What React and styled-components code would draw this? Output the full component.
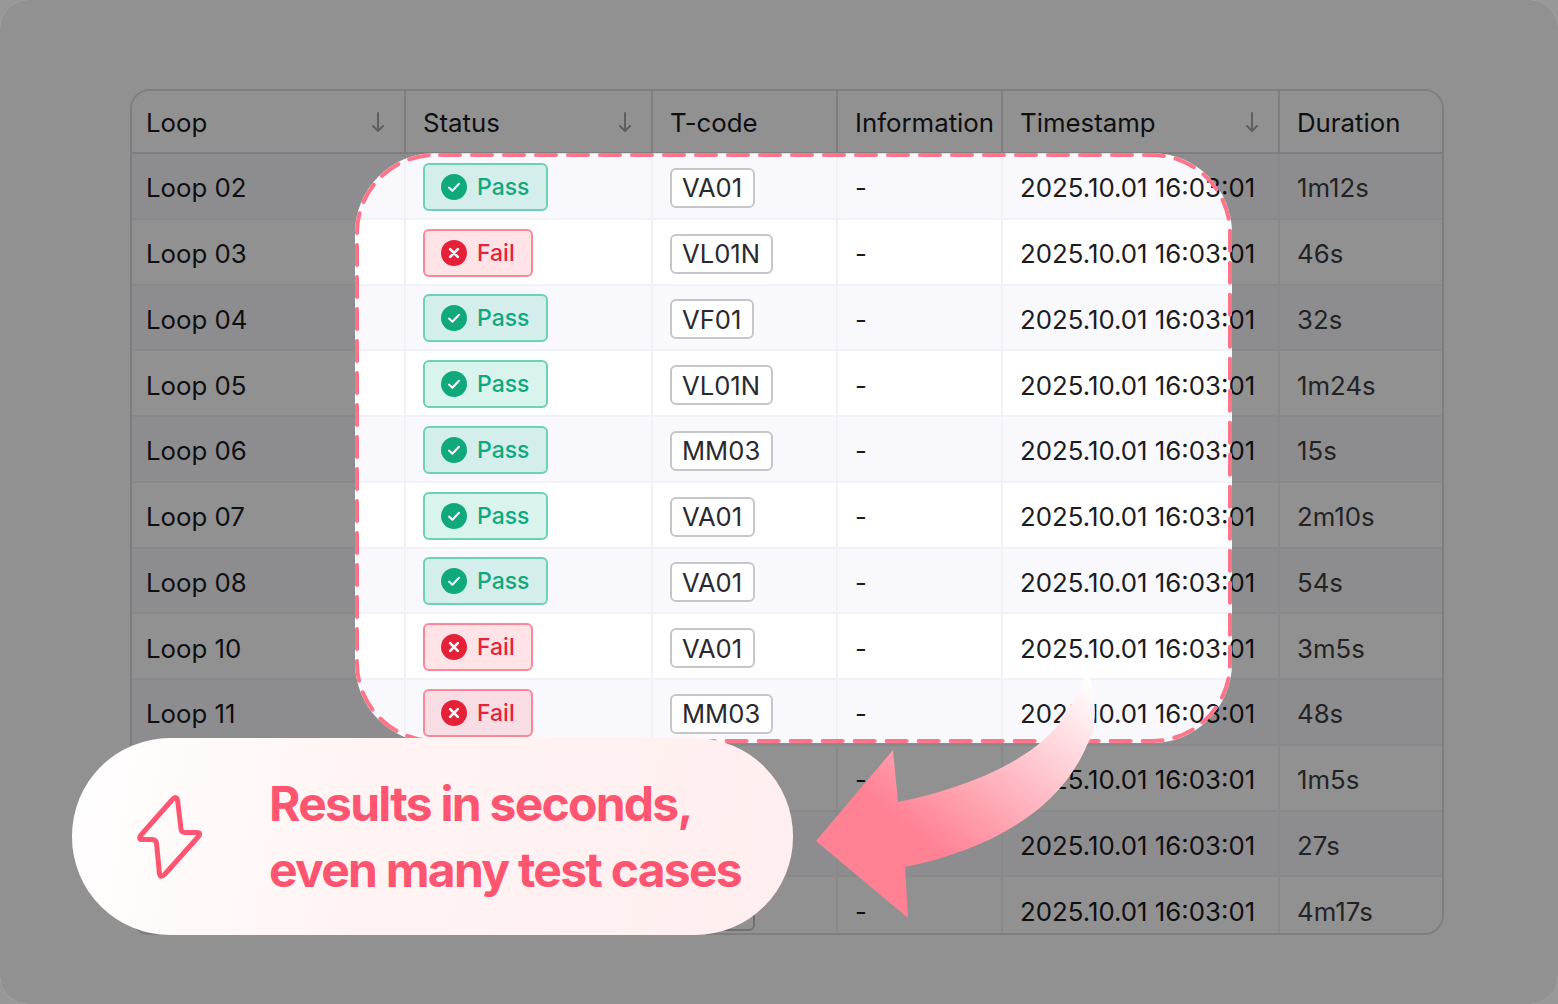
import React from 'react'
import styled, { createGlobalStyle } from 'styled-components'

const GlobalStyle = createGlobalStyle`
  html, body {
    margin: 0;
    padding: 0;
    background: #989898;
  }
  * {
    box-sizing: border-box;
  }
`

const Frame = styled.div`
  position: relative;
  width: 1558px;
  height: 1004px;
  padding: 89px 114px 69px 130px;
  overflow: hidden;
  border-radius: 28px;
  background: #ffffff;
  font-family: Inter, "Liberation Sans", sans-serif;
  color: #1c1c1f;
`

const Table = styled.div`
  height: 846px;
  overflow: hidden;
  border: 2px solid #dddde2;
  border-radius: 20px;
`

const Row = styled.div`
  display: grid;
  grid-template-columns: 274px 247px 185px 165px 277px 1fr;
  height: ${p => (p.$head ? '63px' : '65.75px')};
  background: ${p => (p.$alt ? '#f8f8fd' : '#ffffff')};
  border-bottom: 2px solid ${p => (p.$head ? '#dddde2' : '#f1f1f7')};
`

const Cell = styled.div`
  display: flex;
  align-items: center;
  justify-content: space-between;
  min-width: 0;
  padding: ${p => (p.$head ? '1px' : '4px')} 18px 0 17px;
  border-right: 2px solid ${p => (p.$head ? '#dddde2' : '#f1f1f7')};
  font-size: 25.8px;
  white-space: nowrap;
  color: ${p => (p.$muted ? '#3e3e42' : '#1c1c1f')};

  &:first-child {
    padding-left: 14px;
  }

  &:last-child {
    border-right: 0;
  }
`

const Badge = styled.span`
  display: inline-flex;
  align-items: center;
  gap: 10px;
  height: 48px;
  margin-top: -2px;
  padding: 0 16px;
  border-radius: 6px;
  border: 2px solid ${p => (p.$fail ? '#ff8696' : '#6cd2b6')};
  background: ${p => (p.$fail ? 'rgba(255, 60, 85, 0.14)' : 'rgba(16, 185, 140, 0.16)')};
  color: ${p => (p.$fail ? '#e8213c' : '#10a87c')};
  font-size: 23px;
  font-weight: 500;
`

const Tag = styled.span`
  display: inline-flex;
  align-items: center;
  height: 40px;
  padding: 0 11px 0 10px;
  border-radius: 6px;
  border: 2px solid #c6c6ca;
  background: #ffffff;
  color: #2a2a2e;
  font-size: 25.6px;
`

const Spotlight = styled.div`
  position: absolute;
  left: 355px;
  top: 153px;
  width: 877px;
  height: 590px;
  border-radius: 80px;
  box-shadow: 0 0 0 2000px rgba(0, 0, 0, 0.43);
  pointer-events: none;
`

const DashedEdge = styled.svg`
  position: absolute;
  inset: 0;
  display: block;
`

const Arrow = styled.svg`
  position: absolute;
  left: 0;
  top: 0;
`

const Callout = styled.div`
  position: absolute;
  left: 72px;
  top: 738px;
  display: flex;
  align-items: center;
  width: 721px;
  height: 197px;
  padding-left: 62px;
  border-radius: 98px;
  background: linear-gradient(100deg, #ffffff 0%, #fff4f4 40%, #ffeeef 100%);
`

const CalloutIcon = styled.svg`
  flex: none;
  width: 72px;
  height: 92px;
  margin-right: 64px;
`

const CalloutText = styled.div`
  margin-left: -1px;
  color: #ff5570;
  font-size: 48px;
  font-weight: 700;
  line-height: 66px;
  letter-spacing: -1.75px;
  white-space: nowrap;
`

const rows = [
  ['Loop 02', 'Pass', 'VA01', '1m12s'],
  ['Loop 03', 'Fail', 'VL01N', '46s'],
  ['Loop 04', 'Pass', 'VF01', '32s'],
  ['Loop 05', 'Pass', 'VL01N', '1m24s'],
  ['Loop 06', 'Pass', 'MM03', '15s'],
  ['Loop 07', 'Pass', 'VA01', '2m10s'],
  ['Loop 08', 'Pass', 'VA01', '54s'],
  ['Loop 10', 'Fail', 'VA01', '3m5s'],
  ['Loop 11', 'Fail', 'MM03', '48s'],
  ['Loop 12', 'Pass', 'VA01', '1m5s'],
  ['Loop 13', 'Pass', 'VA01', '27s'],
  ['Loop 14', 'Pass', 'VA01', '4m17s'],
]

const SortArrow = () => (
  <svg width="16" height="22" viewBox="0 0 16 22" fill="none" stroke="#a8a8ac" strokeWidth="2" strokeLinecap="round" strokeLinejoin="round">
    <path d="M8 2v18M3 15l5 5 5-5" />
  </svg>
)

const StatusIcon = ({ fail }) => (
  <svg width="26" height="26" viewBox="0 0 26 26">
    <circle cx="13" cy="13" r="13" fill={fail ? '#e5213a' : '#0fa97c'} />
    {fail
      ? <path d="M9.2 9.2l7.6 7.6M16.8 9.2l-7.6 7.6" stroke="#fff" strokeWidth="2.6" strokeLinecap="round" />
      : <path d="M8 13.6l3.4 3.2 6.6-7" stroke="#fff" strokeWidth="2" strokeLinecap="round" strokeLinejoin="round" fill="none" />}
  </svg>
)

function App() {
  return (
    <Frame>
      <GlobalStyle />
      <Table>
        <Row $head>
          <Cell $head>Loop<SortArrow /></Cell>
          <Cell $head>Status<SortArrow /></Cell>
          <Cell $head>T-code</Cell>
          <Cell $head>Information</Cell>
          <Cell $head>Timestamp<SortArrow /></Cell>
          <Cell $head>Duration</Cell>
        </Row>
        {rows.map((row, i) => (
          <Row key={row[0]} $alt={i % 2 === 0}>
            <Cell>{row[0]}</Cell>
            <Cell>
              <Badge $fail={row[1] === 'Fail'}>
                <StatusIcon fail={row[1] === 'Fail'} />
                {row[1]}
              </Badge>
            </Cell>
            <Cell><Tag>{row[2]}</Tag></Cell>
            <Cell>-</Cell>
            <Cell>2025.10.01 16:03:01</Cell>
            <Cell $muted>{row[3]}</Cell>
          </Row>
        ))}
      </Table>

      <Spotlight>
        <DashedEdge width="877" height="590" viewBox="0 0 877 590" fill="none">
          <rect x="2" y="2" width="873" height="586" rx="78" stroke="#ff7488" strokeWidth="4" strokeDasharray="20 12" strokeDashoffset="-5" strokeLinecap="round" />
        </DashedEdge>
      </Spotlight>

      <Arrow width="1558" height="1004" viewBox="0 0 1558 1004">
        <defs>
          <linearGradient id="arrowFade" gradientUnits="userSpaceOnUse" x1="1090" y1="680" x2="950" y2="860">
            <stop offset="0" stopColor="#ffffff" />
            <stop offset="1" stopColor="#ff8194" />
          </linearGradient>
        </defs>
        <path
          d="M1087 668C1098 700 1097 730 1087 745C1060 810 990 850 905 867L908 918L816 841L893 750L898 802C960 790 1040 760 1065 714C1076 698 1083 685 1087 668Z"
          fill="url(#arrowFade)"
        />
      </Arrow>

      <Callout>
        <CalloutIcon viewBox="0 0 72 92" fill="none">
          <path
            d="M37.5 9.5Q43 3 43.8 11L47 38Q47.4 41.5 51 41.5H62.5Q67.5 41.5 64.5 45.5L31 83Q26 88 25.4 82L22.6 53Q22.2 48.5 18 48.5H9Q3.5 48.5 7 44Z"
            stroke="#ff5570"
            strokeWidth="5"
            strokeLinejoin="round"
          />
        </CalloutIcon>
        <CalloutText>
          Results in seconds,
          <br />
          even many test cases
        </CalloutText>
      </Callout>
    </Frame>
  )
}

export default App
